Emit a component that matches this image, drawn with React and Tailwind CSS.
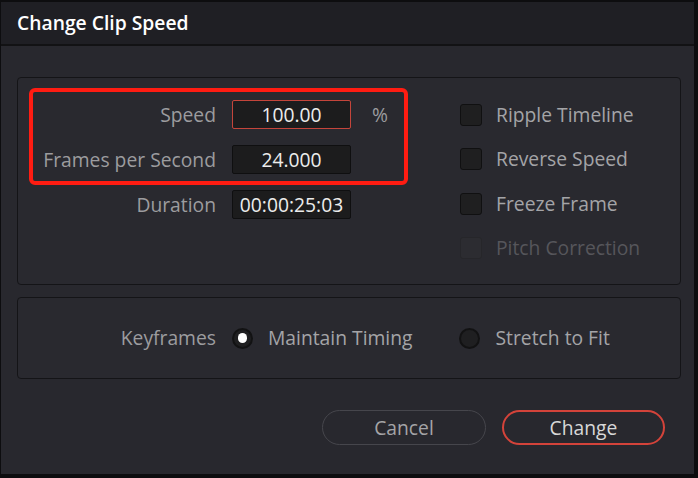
import React from 'react';

const font = { fontFamily: '"Open Sans", "Noto Sans", sans-serif' };

function Field({ label, value, highlight, suffix }) {
    return (
        <div className="flex items-center h-[29px]">
            <span className="w-[198px] text-right text-[19.3px] text-[#9c9c9f] leading-none whitespace-nowrap">
                {label}
            </span>
            <div
                className={`ml-4 w-[119px] h-[29px] flex items-center justify-center rounded-[2px] bg-[#1c1c1d] border text-[19.3px] text-[#ececec] leading-none ${
                    highlight ? 'border-[#c4453b]' : 'border-[#0f0f10]'
                }`}
            >
                {value}
            </div>
            {suffix && (
                <span className="ml-[21px] text-[19.3px] text-[#9c9c9f] leading-none">{suffix}</span>
            )}
        </div>
    );
}

function Check({ label, disabled }) {
    return (
        <div className="flex items-center h-[29px]">
            <div
                className={`w-[22px] h-[22px] rounded-[3px] border ${
                    disabled ? 'bg-[#2c2c31] border-[#26262a]' : 'bg-[#1f1f20] border-[#101011]'
                }`}
            />
            <span
                className={`ml-[14px] text-[19.3px] leading-none whitespace-nowrap ${
                    disabled ? 'text-[#56565b]' : 'text-[#a4a4a7]'
                }`}
            >
                {label}
            </span>
        </div>
    );
}

function Radio({ checked }) {
    return (
        <div className="w-[21px] h-[21px] rounded-full bg-[#1f1f21] border-2 border-[#121213] flex items-center justify-center">
            {checked && <div className="w-[9px] h-[10px] rounded-full bg-white" />}
        </div>
    );
}

export default function App() {
    return (
        <div
            style={font}
            className="w-[698px] h-[478px] bg-[#0d0d0f] pt-[2px] pl-[1px] pr-[4px] pb-[4px] flex flex-col"
        >
            {/* title bar */}
            <div className="h-[44px] shrink-0 bg-[#1f1f24] flex items-center pl-4 border-b-2 border-[#121214]">
                <h1 className="text-[19.3px] font-semibold text-white leading-none">
                    Change Clip Speed
                </h1>
            </div>

            <div className="flex-1 bg-[#28282e] pt-[31px] pl-4 pr-[13px] flex flex-col">

                {/* speed settings */}
                <div className="relative h-[208px] shrink-0 rounded-[4px] border border-[#141417] bg-[#29292f] flex pt-[22px]">
                    <div className="w-[442px] flex flex-col gap-4">
                        <Field label="Speed" value="100.00" highlight suffix="%" />
                        <Field label="Frames per Second" value="24.000" />
                        <Field label="Duration" value="00:00:25:03" />
                    </div>
                    <div className="flex flex-col gap-[15.5px]">
                        <Check label="Ripple Timeline" />
                        <Check label="Reverse Speed" />
                        <Check label="Freeze Frame" />
                        <Check label="Pitch Correction" disabled />
                    </div>

                    {/* annotation box */}
                    <div className="absolute left-[11px] top-[10px] w-[379px] h-[97px] border-[4px] border-[#ff1c12] rounded-[6px]" />
                </div>

                {/* keyframes */}
                <div className="mt-[12px] h-[82px] shrink-0 rounded-[4px] border border-[#141417] bg-[#29292f] flex items-center">
                    <span className="w-[198px] text-right text-[19.3px] text-[#9c9c9f] leading-none">
                        Keyframes
                    </span>
                    <div className="ml-[16px] flex items-center">
                        <Radio checked />
                        <span className="ml-[15px] text-[19.3px] text-[#a4a4a7] leading-none whitespace-nowrap">
                            Maintain Timing
                        </span>
                    </div>
                    <div className="ml-[46px] flex items-center">
                        <Radio />
                        <span className="ml-[16px] text-[19.3px] text-[#a4a4a7] leading-none whitespace-nowrap">
                            Stretch to Fit
                        </span>
                    </div>
                </div>

                {/* buttons */}
                <div className="mt-[31px] flex justify-end gap-4 pr-[16px]">
                    <button className="w-[164px] h-[35px] rounded-full border border-[#46464c] text-[19.3px] text-[#a4a4a7] leading-none">
                        Cancel
                    </button>
                    <button className="w-[163px] h-[35px] rounded-full border-2 border-[#d4433a] text-[19.3px] text-[#d8d8d8] leading-none">
                        Change
                    </button>
                </div>
            </div>
        </div>
    );
}
